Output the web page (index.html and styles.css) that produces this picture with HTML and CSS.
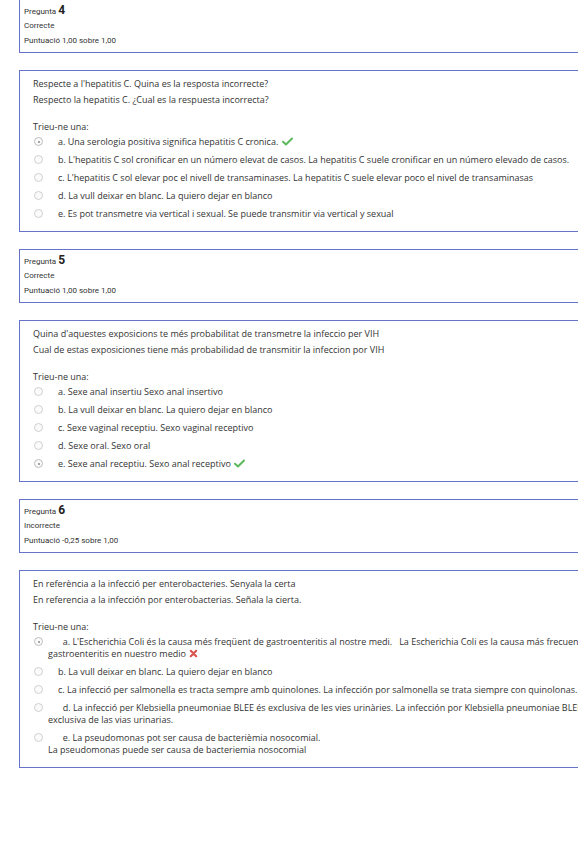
FILE: index.html
```html
<!DOCTYPE html>
<html lang="ca">
<head>
<meta charset="utf-8">
<title>Preguntes</title>
<link rel="stylesheet" href="styles.css">
</head>
<body>
<div class="page">

  <div class="info first">
    <div class="info-line">Pregunta <span class="qno">4</span></div>
    <div class="info-line">Correcte</div>
    <div class="info-line">Puntuació 1,00 sobre 1,00</div>
  </div>
  <div class="content">
    <div class="qtext">Respecte a l'hepatitis C. Quina es la resposta incorrecte?</div>
    <div class="qtext">Respecto la hepatitis C. ¿Cual es la respuesta incorrecta?</div>
    <div class="prompt">Trieu-ne una:</div>
    <div class="answers">
      <div class="opt"><span class="radio checked"></span>a. Una serologia positiva significa hepatitis C cronica. <svg class="ok" viewBox="0 0 12 10" width="11" height="9"><path d="M1 5.2 L4.3 8.4 L11 1.6" fill="none" stroke="#5cb85c" stroke-width="2.2" stroke-linecap="round" stroke-linejoin="round"/></svg></div>
      <div class="opt"><span class="radio"></span>b. L'hepatitis C sol cronificar en un número elevat de casos. La hepatitis C suele cronificar en un número elevado de casos.</div>
      <div class="opt"><span class="radio"></span>c. L'hepatitis C sol elevar poc el nivell de transaminases. La hepatitis C suele elevar poco el nivel de transaminasas</div>
      <div class="opt"><span class="radio"></span>d. La vull deixar en blanc. La quiero dejar en blanco</div>
      <div class="opt"><span class="radio"></span>e. Es pot transmetre via vertical i sexual. Se puede transmitir via vertical y sexual</div>
    </div>
  </div>

  <div class="info">
    <div class="info-line">Pregunta <span class="qno">5</span></div>
    <div class="info-line">Correcte</div>
    <div class="info-line">Puntuació 1,00 sobre 1,00</div>
  </div>
  <div class="content">
    <div class="qtext">Quina d'aquestes exposicions te més probabilitat de transmetre la infeccio per VIH</div>
    <div class="qtext">Cual de estas exposiciones tiene más probabilidad de transmitir la infeccion por VIH</div>
    <div class="prompt">Trieu-ne una:</div>
    <div class="answers">
      <div class="opt"><span class="radio"></span>a. Sexe anal insertiu Sexo anal insertivo</div>
      <div class="opt"><span class="radio"></span>b. La vull deixar en blanc. La quiero dejar en blanco</div>
      <div class="opt"><span class="radio"></span>c. Sexe vaginal receptiu. Sexo vaginal receptivo</div>
      <div class="opt"><span class="radio"></span>d. Sexe oral. Sexo oral</div>
      <div class="opt"><span class="radio checked"></span>e. Sexe anal receptiu. Sexo anal receptivo <svg class="ok" viewBox="0 0 12 10" width="11" height="9"><path d="M1 5.2 L4.3 8.4 L11 1.6" fill="none" stroke="#5cb85c" stroke-width="2.2" stroke-linecap="round" stroke-linejoin="round"/></svg></div>
    </div>
  </div>

  <div class="info">
    <div class="info-line">Pregunta <span class="qno">6</span></div>
    <div class="info-line">Incorrecte</div>
    <div class="info-line">Puntuació -0,25 sobre 1,00</div>
  </div>
  <div class="content">
    <div class="qtext">En referència a la infecció per enterobacteries. Senyala la certa</div>
    <div class="qtext">En referencia a la infección por enterobacterias. Señala la cierta.</div>
    <div class="prompt">Trieu-ne una:</div>
    <div class="answers">
      <div class="opt"><span class="radio checked"></span>&nbsp; a. L'Escherichia Coli és la causa més freqüent de gastroenteritis al nostre medi. &nbsp; La Escherichia Coli es la causa más frecuente de gastroenteritis en nuestro medio <svg class="bad" viewBox="0 0 10 10" width="9" height="9"><path d="M2 2 L8 8 M8 2 L2 8" fill="none" stroke="#d9534f" stroke-width="2.4" stroke-linecap="round"/></svg></div>
      <div class="opt"><span class="radio"></span>b. La vull deixar en blanc. La quiero dejar en blanco</div>
      <div class="opt"><span class="radio"></span>c. La infecció per salmonella es tracta sempre amb quinolones. La infección por salmonella se trata siempre con quinolonas.</div>
      <div class="opt"><span class="radio"></span>&nbsp; d. La infecció per Klebsiella pneumoniae BLEE és exclusiva de les vies urinàries. La infección por Klebsiella pneumoniae BLEE es exclusiva de las vias urinarias.</div>
      <div class="opt"><span class="radio"></span>&nbsp; e. La pseudomonas pot ser causa de bacterièmia nosocomial.<br>La pseudomonas puede ser causa de bacteriemia nosocomial</div>
    </div>
  </div>

</div>
</body>
</html>
```

FILE: styles.css
```css
html, body {
  margin: 0;
  padding: 0;
  background: #ffffff;
  overflow: hidden;
}

.page {
  width: 610px;
  margin-left: 19px;
  margin-top: -1px;
  color: #333333;
}

.info {
  border: 1px solid #6573c8;
  padding: 3px 4px 4px 4px;
  margin-bottom: 17px;
  font-family: Roboto, "Liberation Sans", sans-serif;
  font-size: 8px;
  color: #333333;
}

.info-line {
  line-height: 15px;
  height: 15px;
}

.qno {
  font-size: 12px;
  font-weight: bold;
  color: #222222;
}

.content {
  border: 1px solid #6573c8;
  padding: 5px 13px 5px 13px;
  margin-bottom: 17px;
  font-family: "Open Sans", "Liberation Sans", sans-serif;
  font-size: 9px;
  color: #333333;
}

.qtext {
  line-height: 16px;
  height: 16px;
  white-space: nowrap;
}

.prompt {
  margin-top: 12px;
  line-height: 14px;
}

.answers {
  padding-top: 2px;
}

.opt {
  line-height: 12px;
  margin-bottom: 6px;
  padding-left: 15px;
  text-indent: -14px;
}

.radio {
  display: inline-block;
  box-sizing: border-box;
  width: 9px;
  height: 9px;
  border: 1px solid #cfcfcf;
  border-radius: 50%;
  background: #fbfbfb;
  vertical-align: -1px;
  margin-right: 15px;
  position: relative;
}

.radio.checked {
  border-color: #bdbdbd;
}

.radio.checked::after {
  content: "";
  position: absolute;
  left: 2.5px;
  top: 2.5px;
  width: 2px;
  height: 2px;
  border-radius: 50%;
  background: #8a8a8a;
}

.ok,
.bad {
  vertical-align: -1px;
  margin-left: 1px;
}
```
